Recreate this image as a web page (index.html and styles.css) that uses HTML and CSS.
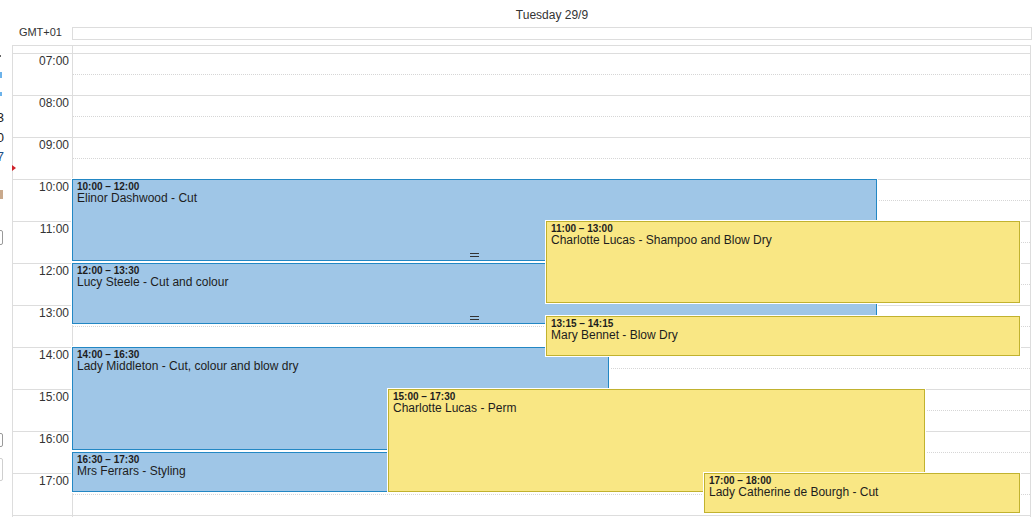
FILE: index.html
```html
<!DOCTYPE html>
<html lang="en">
<head>
<meta charset="utf-8">
<title>Tuesday 29/9</title>
<link rel="stylesheet" href="styles.css">
</head>
<body>
<div class="page">
  <aside class="sidebar">
    <div class="frag-dot"></div>
    <div class="frag-blue frag-b1"></div>
    <div class="frag-blue frag-b2"></div>
    <div class="frag-text frag-t1">3</div>
    <div class="frag-text frag-t2">0</div>
    <div class="frag-text frag-t3">7</div>
    <div class="frag-tan"></div>
    <div class="frag-box frag-box1"></div>
    <div class="frag-box frag-box2"></div>
    <div class="frag-box frag-box3"></div>
  </aside>
  <main class="cal">
    <div class="day-title">Tuesday 29/9</div>
    <div class="allday">
      <div class="tz">GMT+01</div>
      <div class="allday-box"></div>
    </div>
    <div class="grid">
      <div class="grid-top"><div class="gt-axis"></div><div class="gt-day"></div></div>
      <div class="grid-body">
        <div class="row"><div class="axis">07:00</div><div class="slot"><div class="half"></div></div></div>
        <div class="row"><div class="axis">08:00</div><div class="slot"><div class="half"></div></div></div>
        <div class="row"><div class="axis">09:00</div><div class="slot"><div class="half"></div></div></div>
        <div class="row"><div class="axis">10:00</div><div class="slot"><div class="half"></div></div></div>
        <div class="row"><div class="axis">11:00</div><div class="slot"><div class="half"></div></div></div>
        <div class="row"><div class="axis">12:00</div><div class="slot"><div class="half"></div></div></div>
        <div class="row"><div class="axis">13:00</div><div class="slot"><div class="half"></div></div></div>
        <div class="row"><div class="axis">14:00</div><div class="slot"><div class="half"></div></div></div>
        <div class="row"><div class="axis">15:00</div><div class="slot"><div class="half"></div></div></div>
        <div class="row"><div class="axis">16:00</div><div class="slot"><div class="half"></div></div></div>
        <div class="row"><div class="axis">17:00</div><div class="slot"><div class="half"></div></div></div>
        <div class="row"><div class="axis">18:00</div><div class="slot"><div class="half"></div></div></div>

        <div class="events">
          <div class="ev blue" style="left:0;top:126px;width:805px;height:82px">
            <div class="ev-time">10:00 – 12:00</div>
            <div class="ev-title">Elinor Dashwood - Cut</div>
            <div class="grip"></div>
          </div>
          <div class="ev blue" style="left:0;top:210px;width:805px;height:61px">
            <div class="ev-time">12:00 – 13:30</div>
            <div class="ev-title">Lucy Steele - Cut and colour</div>
            <div class="grip"></div>
          </div>
          <div class="ev blue" style="left:0;top:294px;width:537px;height:103px">
            <div class="ev-time">14:00 – 16:30</div>
            <div class="ev-title">Lady Middleton - Cut, colour and blow dry</div>
          </div>
          <div class="ev blue" style="left:0;top:399px;width:537px;height:40px">
            <div class="ev-time">16:30 – 17:30</div>
            <div class="ev-title">Mrs Ferrars - Styling</div>
          </div>
          <div class="ev yellow" style="left:474px;top:168px;width:474px;height:82px">
            <div class="ev-time">11:00 – 13:00</div>
            <div class="ev-title">Charlotte Lucas - Shampoo and Blow Dry</div>
          </div>
          <div class="ev yellow" style="left:474px;top:263px;width:474px;height:40px">
            <div class="ev-time">13:15 – 14:15</div>
            <div class="ev-title">Mary Bennet - Blow Dry</div>
          </div>
          <div class="ev yellow" style="left:316px;top:336px;width:537px;height:103px">
            <div class="ev-time">15:00 – 17:30</div>
            <div class="ev-title">Charlotte Lucas - Perm</div>
          </div>
          <div class="ev yellow" style="left:632px;top:420px;width:316px;height:40px">
            <div class="ev-time">17:00 – 18:00</div>
            <div class="ev-title">Lady Catherine de Bourgh - Cut</div>
          </div>
        </div>
        <div class="now-arrow"></div>
      </div>
    </div>
  </main>
</div>
</body>
</html>
```
FILE: styles.css
```css
html, body {
  margin: 0;
  height: 100%;
  overflow: hidden;
  background: #fff;
}
body {
  font-family: "Liberation Sans", Arial, Helvetica, sans-serif;
  color: #222;
}
.page {
  display: flex;
  height: 517px;
}

/* clipped sidebar remnants */
.sidebar {
  width: 12px;
  flex: none;
  overflow: hidden;
  display: flex;
  flex-direction: column;
  align-items: flex-start;
}
.frag-dot {
  margin-top: 55px;
  width: 1px;
  height: 2px;
  background: #666;
}
.frag-blue {
  width: 2px;
  background: #6db3ea;
}
.frag-b1 { margin-top: 15px; height: 6px; }
.frag-b2 { margin-top: 14px; height: 4px; }
.frag-text {
  width: 12px;
  margin-left: -8px;
  text-align: right;
  font-size: 13px;
  line-height: 12px;
  height: 12px;
  color: #222;
}
.frag-t1 { margin-top: 16px; }
.frag-t2 { margin-top: 8px; }
.frag-t3 { margin-top: 7px; color: #1d4f86; }
.frag-tan {
  margin-top: 27px;
  width: 3px;
  height: 9px;
  background: #c9a98c;
}
.frag-box {
  width: 10px;
  margin-left: -7px;
  box-sizing: border-box;
  border: 1px solid #9a9a9a;
  border-radius: 2px;
}
.frag-box1 { margin-top: 31px; height: 15px; }
.frag-box2 { margin-top: 188px; height: 14px; }
.frag-box3 { margin-top: 11px; height: 23px; border-color: #cfcfcf; }

/* calendar */
.cal {
  flex: 1;
  min-width: 0;
  padding-right: 1px;
}
.day-title {
  text-align: center;
  font-size: 12px;
  line-height: 14px;
  padding: 8px 0 5px 60px;
  color: #333;
}
.allday {
  display: flex;
  height: 13px;
  margin-bottom: 5px;
}
.tz {
  width: 60px;
  box-sizing: border-box;
  padding-right: 10px;
  text-align: right;
  font-size: 11px;
  line-height: 11px;
  color: #333;
}
.allday-box {
  flex: 1;
  box-sizing: border-box;
  height: 13px;
  border: 1px solid #ddd;
}
.grid {
  border: 1px solid #ddd;
  border-bottom: none;
  margin-right: 1px;
}
.grid-top {
  display: flex;
  height: 7px;
  border-bottom: 1px solid #ddd;
}
.gt-axis {
  width: 60px;
  box-sizing: border-box;
  border-right: 1px solid #ddd;
}
.gt-day { flex: 1; }
.grid-body {
  position: relative;
}
.row {
  display: flex;
  height: 42px;
  box-sizing: border-box;
  border-bottom: 1px solid #ddd;
}
.axis {
  width: 60px;
  box-sizing: border-box;
  border-right: 1px solid #ddd;
  padding-right: 3px;
  text-align: right;
  font-size: 12px;
  line-height: 14px;
  color: #333;
}
.slot { flex: 1; }
.half {
  height: 20px;
  border-bottom: 1px dotted #d6d6d6;
}

/* events */
.events {
  position: absolute;
  left: 59px;
  top: -1px;
  right: 0;
  bottom: 0;
}
.ev {
  position: absolute;
  box-sizing: border-box;
  border: 1px solid;
  padding: 1px 4px 0;
  overflow: hidden;
  box-shadow: 0 0 0 1px #fff;
  color: #1d1d1d;
  white-space: nowrap;
}
.ev.blue {
  background: #9fc6e7;
  border-color: #2287c4;
}
.ev.yellow {
  background: #f9e784;
  border-color: #c1b22f;
}
.ev-time {
  font-size: 10px;
  font-weight: bold;
  line-height: 11px;
}
.ev-title {
  font-size: 12px;
  line-height: 12px;
}
.grip {
  position: absolute;
  left: 50%;
  bottom: 3px;
  width: 9px;
  height: 2px;
  margin-left: -5px;
  border-top: 1px solid #333;
  border-bottom: 1px solid #333;
}
.now-arrow {
  position: absolute;
  left: -1px;
  top: 111px;
  width: 0;
  height: 0;
  border-left: 4px solid #d0232b;
  border-top: 3px solid transparent;
  border-bottom: 3px solid transparent;
}
```
